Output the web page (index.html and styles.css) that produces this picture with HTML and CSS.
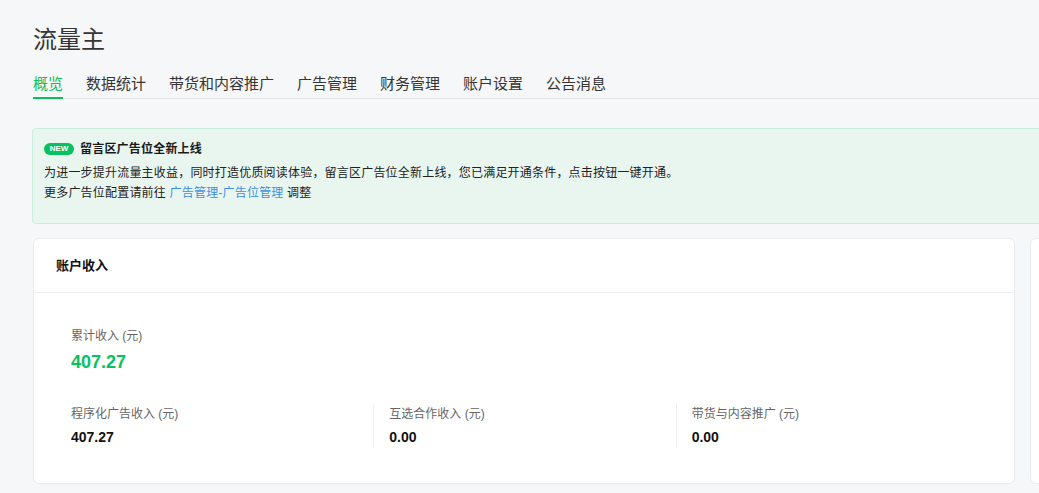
FILE: index.html
```html
<!DOCTYPE html>
<html lang="zh-CN">
<head>
    <meta charset="UTF-8">
    <title>流量主</title>
    <link rel="stylesheet" href="styles.css">
</head>
<body>
<div class="page">
    <h1 class="title">流量主</h1>

    <div class="tabs">
        <a class="tab active">概览</a>
        <a class="tab">数据统计</a>
        <a class="tab">带货和内容推广</a>
        <a class="tab">广告管理</a>
        <a class="tab">财务管理</a>
        <a class="tab">账户设置</a>
        <a class="tab">公告消息</a>
    </div>

    <div class="notice">
        <div class="notice-title"><span class="badge">NEW</span>留言区广告位全新上线</div>
        <div class="notice-text">
            <p>为进一步提升流量主收益，同时打造优质阅读体验，留言区广告位全新上线，您已满足开通条件，点击按钮一键开通。</p>
            <p>更多广告位配置请前往 <a class="link">广告管理-广告位管理</a> 调整</p>
        </div>
    </div>

    <div class="cards">
        <div class="card">
            <div class="card-head">账户收入</div>
            <div class="card-body">
                <div class="label">累计收入 (元)</div>
                <div class="total">407.27</div>
                <div class="cols">
                    <div class="col">
                        <div class="label">程序化广告收入 (元)</div>
                        <div class="value">407.27</div>
                    </div>
                    <div class="col">
                        <div class="label">互选合作收入 (元)</div>
                        <div class="value">0.00</div>
                    </div>
                    <div class="col">
                        <div class="label">带货与内容推广 (元)</div>
                        <div class="value">0.00</div>
                    </div>
                </div>
            </div>
        </div>
        <div class="card side"></div>
    </div>
</div>
</body>
</html>
```

FILE: styles.css
```css
body {
    margin: 0;
    background: #f6f7f9;
    font-family: "Liberation Sans", "Noto Sans CJK SC", sans-serif;
    color: #222;
    overflow: hidden;
}
.page {
    width: 1400px;
    padding: 24px 0 0 33px;
}
.title {
    margin: 0;
    font-size: 24px;
    font-weight: normal;
    line-height: 32px;
    color: #353535;
}
.tabs {
    display: flex;
    gap: 23px;
    margin-top: 18px;
    border-bottom: 1px solid #e3e4e6;
}
.tab {
    font-size: 15px;
    line-height: 20px;
    padding-bottom: 3px;
    margin-bottom: -1px;
    color: #353535;
    border-bottom: 2px solid transparent;
}
.tab.active {
    color: #07c160;
    border-bottom-color: #07c160;
}
.notice {
    margin: 29px 0 0 -1px;
    padding: 10px 11px 20px;
    background: #e9f6f0;
    border: 1px solid #c8eedb;
    border-radius: 4px;
}
.notice-title {
    display: flex;
    align-items: center;
    font-size: 12px;
    font-weight: bold;
    letter-spacing: 0.2px;
    line-height: 20px;
    color: #1a1a1a;
}
.badge {
    display: inline-block;
    width: 30px;
    height: 12px;
    margin-right: 6px;
    border-radius: 6px;
    background: #07c160;
    color: #fff;
    font-size: 8px;
    letter-spacing: 0;
    line-height: 12px;
    text-align: center;
}
.notice-text {
    margin-top: 4px;
    font-size: 12px;
    letter-spacing: 0.2px;
    line-height: 20px;
    color: #222;
}
.notice-text p {
    margin: 0;
}
.link {
    color: #3e8ee6;
}
.cards {
    display: grid;
    grid-template-columns: 982px 300px;
    gap: 15px;
    margin-top: 14px;
}
.card {
    background: #fff;
    border: 1px solid #eaebed;
    border-radius: 6px;
}
.card-head {
    padding: 0 22px;
    line-height: 53px;
    font-size: 13px;
    font-weight: bold;
    color: #111;
    border-bottom: 1px solid #eeeff1;
}
.card-body {
    padding: 33px 36px 35px 37px;
}
.label {
    font-size: 12px;
    line-height: 20px;
    color: #666;
}
.total {
    margin-top: 3px;
    font-size: 18px;
    font-weight: bold;
    line-height: 26px;
    color: #07c160;
}
.cols {
    display: grid;
    grid-template-columns: repeat(3, 1fr);
    margin-top: 29px;
}
.col + .col {
    border-left: 1px solid #eeeff1;
    padding-left: 15px;
}
.value {
    margin-top: 2px;
    font-size: 14px;
    font-weight: bold;
    line-height: 22px;
    color: #111;
}
```
